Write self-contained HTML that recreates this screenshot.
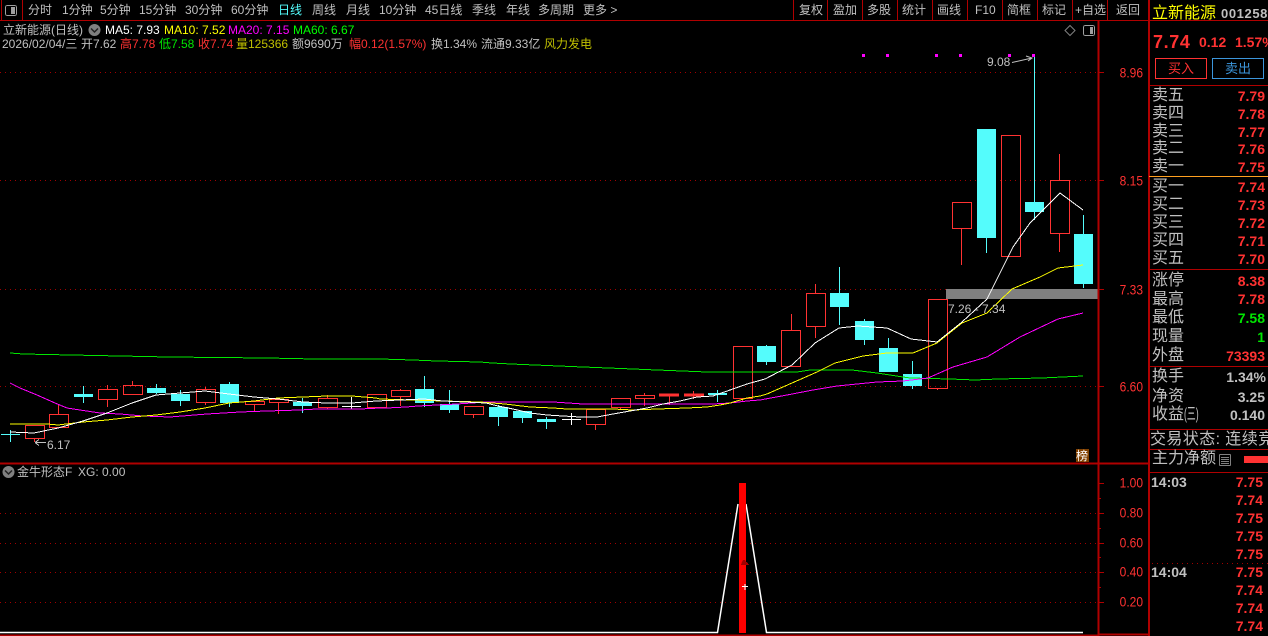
<!DOCTYPE html>
<html><head><meta charset="utf-8">
<style>
html,body{margin:0;padding:0;background:#000;width:1268px;height:636px;overflow:hidden}
body{position:relative;font-family:"Liberation Sans","WenQuanYi Zen Hei","Noto Sans CJK SC",sans-serif;font-size:12px;color:#c0c0c0}
svg{position:absolute;left:0;top:0}
.t{position:absolute;white-space:nowrap;line-height:16px;height:16px}
.r{color:#ff3232}.g{color:#00e600}.y{color:#c0c000}.w{color:#fff}.m{color:#ff00ff}.yy{color:#ffff00}.c{color:#54fcfc}
.l{font-size:16px;line-height:18px;height:18px;left:1152px}
.v{font-size:14px;font-weight:bold;color:#ff3232;right:3px}
.a{font-size:12px;color:#ff3232;right:125px;transform:scaleY(1.18)}
.k{font-size:14px;font-weight:bold;color:#ff3232;right:5px}
.b{position:absolute;box-sizing:border-box;width:52px;height:21px;top:58px;text-align:center;line-height:19px;font-size:13px}
</style></head><body>
<svg width="1268" height="636" viewBox="0 0 1268 636" shape-rendering="crispEdges" fill="none">
<!-- grid -->
<g stroke="#a00000" stroke-dasharray="1 4">
<path d="M0 72.500H1098M0 180.500H1098M0 289.500H1098M0 386.500H1098M0 513.500H1098M0 543.500H1098M0 572.500H1098M0 602.500H1098M1152 563.500H1268"/>
</g>
<rect x="946" y="289" width="152" height="10" fill="#808080"/>
<!-- frame -->
<g stroke="#b00000">
<path d="M0 20.500H1268M1.500 0V20M22.500 0V20M793.500 0V20M827.500 0V20M862.500 0V20M897.500 0V20M932.500 0V20M967.500 0V20M1002.500 0V20M1037.500 0V20M1072.500 0V20M1107.500 0V20"/>
<path d="M1149 85.500H1268M1149 269.500H1268M1149 366.500H1268M1149 429.500H1268M1149 449.500H1268M1149 472.500H1268"/>
<path d="M0 463.500H1149M1098.500 20V636M1149 0V636" stroke-width="2"/>
<path d="M1098 634.500H1149M0 635.500H1098" stroke-width="2"/>
<path d="M1098 72.500h6M1098 180.500h6M1098 289.500h6M1098 386.500h6M1099 483.500h5M1099 513.500h5M1099 543.500h5M1099 572.500h5M1099 602.500h5M1099 498.500h2M1099 528.500h2M1099 557.500h2M1099 587.500h2"/>
</g>
<path d="M1149 176.500H1268" stroke="#ffa020"/>
<!-- red candles -->
<g stroke="#ff3232">
<path d="M34.500 438v4M58.500 404v10M107.500 385v4M107.500 399v8M132.500 381v4M132.500 394v1M205.500 387v2M205.500 402v3M254.500 404v7M278.500 402v12M327.500 395v3M327.500 407v2M376.500 407v1M400.500 389v1M400.500 396v10M473.500 414v4M595.500 424v6M620.500 407v2M644.500 393v2M644.500 398v8M669.500 396v9M693.500 391v3M693.500 396v3M742.500 398v3M791.500 314v16M815.500 284v9M815.500 326v12M937.500 388v2M961.500 228v37M1059.500 154v26M1059.500 233v19"/>
<rect x="25.500" y="425.500" width="19" height="13"/><rect x="49.500" y="414.500" width="19" height="13"/>
<rect x="98.500" y="389.500" width="19" height="10"/><rect x="123.500" y="385.500" width="19" height="9"/>
<rect x="196.500" y="389.500" width="19" height="13"/><rect x="245.500" y="401.500" width="19" height="3"/>
<rect x="269.500" y="399.500" width="19" height="3"/><rect x="318.500" y="398.500" width="19" height="9"/>
<rect x="367.500" y="394.500" width="19" height="13"/><rect x="391.500" y="390.500" width="19" height="6"/>
<rect x="464.500" y="406.500" width="19" height="8"/><rect x="586.500" y="409.500" width="19" height="15"/>
<rect x="611.500" y="398.500" width="19" height="9"/><rect x="635.500" y="395.500" width="19" height="3"/>
<rect x="659.500" y="394" width="19" height="2" fill="#ff3232"/><rect x="684.500" y="394" width="19" height="2" fill="#ff3232"/>
<rect x="733.500" y="346.500" width="19" height="52"/><rect x="781.500" y="330.500" width="19" height="36"/>
<rect x="806.500" y="293.500" width="19" height="33"/><rect x="928.500" y="299.500" width="19" height="89"/>
<rect x="952.500" y="202.500" width="19" height="26"/><rect x="1001.500" y="135.500" width="19" height="121"/>
<rect x="1050.500" y="180.500" width="19" height="53"/>
</g>
<!-- cyan candles -->
<g stroke="#54fcfc">
<path d="M1 434.500H20M10.500 430v12M83.500 386v17M156.500 384v10M180.500 390v16M229.500 382v25M302.500 398v15M424.500 376v31M449.500 390v23M498.500 405v21M522.500 411v12M546.500 417v12M766.500 345v20M839.500 267v58M864.500 319v26M888.500 338v34M912.500 361v28M986.500 129v124M1034.500 55v165M1083.500 215v73M717.500 390v12"/>
</g>
<g fill="#54fcfc">
<rect x="74" y="394" width="19" height="3"/><rect x="147" y="388" width="19" height="5"/><rect x="171" y="394" width="19" height="7"/>
<rect x="220" y="384" width="19" height="19"/><rect x="293" y="402" width="19" height="4"/><rect x="415" y="389" width="19" height="14"/>
<rect x="440" y="404" width="19" height="6"/><rect x="489" y="407" width="19" height="10"/><rect x="513" y="411" width="19" height="7"/>
<rect x="537" y="419" width="19" height="3"/><rect x="708" y="393" width="19" height="2"/><rect x="757" y="346" width="19" height="16"/>
<rect x="830" y="293" width="19" height="14"/><rect x="855" y="321" width="19" height="19"/><rect x="879" y="348" width="19" height="24"/>
<rect x="903" y="374" width="19" height="12"/><rect x="977" y="129" width="19" height="109"/><rect x="1025" y="202" width="19" height="10"/>
<rect x="1074" y="234" width="19" height="50"/>
</g>
<!-- white crosses -->
<path d="M342 406.500H361M351.500 397v12M562 419.500H581M571.500 413v12" stroke="#fff"/>
<!-- MA60 -->
<polyline stroke="#00e600" points="10,353 23,354 71,355 120,356 169,357 267,358 315,359 380,359 413,360 437,361 480,362 492,363 511,364 535,365 559,366 583,367 608,368 633,369 657,370 682,371 707,372 797,372 810,370 852,370 877,373 903,377 910,378 950,379 975,380 998,379 1042,378 1083,376"/>
<!-- MA20 -->
<polyline stroke="#ff00ff" points="10,383 20,388 37,395 55,403 67,408 80,410 100,413 120,414 143,416 170,417 207,414 240,412 267,411 300,410 317,409 360,409 380,408 387,408 406,407 418,406 437,405 457,404 487,402 553,402 583,404 713,404 730,403 747,401 760,400 787,395 813,390 837,386 877,382 903,381 928,378 953,367 987,357 1020,337 1058,319 1083,313"/>
<!-- MA10 -->
<polyline stroke="#ffff00" points="10,424 47,424 58,425 83,422 107,420 132,417 156,415 180,412 205,408 229,403 254,401 278,398 303,397 327,396 352,396 376,398 380,399 443,401 480,402 505,404 530,407 553,408 567,409 613,409 633,410 657,409 687,408 707,407 720,405 730,403 747,398 760,396 767,394 792,383 817,372 835,363 863,356 887,353 913,353 937,343 962,323 987,313 1012,289 1040,277 1058,268 1083,265"/>
<!-- MA5 -->
<polyline stroke="#fff" points="10,432 34,433 58,428 83,421 107,413 132,403 156,395 180,393 205,391 229,394 254,397 278,399 303,402 327,403 352,403 376,401 400,400 424,399 443,401 486,403 498,406 513,409 530,413 547,415 563,416 580,417 597,417 613,414 630,411 647,408 663,404 680,401 697,397 713,396 730,390 747,384 765,379 792,365 815,343 839,328 858,326 887,328 911,339 937,342 962,322 987,299 1013,247 1030,223 1060,193 1083,210" />
<!-- lower -->
<path d="M0 632.500H717.500L738 504M746 504L766.500 632.500H1083" stroke="#fff" stroke-width="1.500" shape-rendering="auto"/>
<rect x="739" y="483" width="7" height="150" fill="#ff0000"/>
<path d="M741 565h8l-2-3h-1l-1-2h-2l-1 2z" fill="#a00000"/>
<path d="M742 586.500h6M745 584v6" stroke="#fff"/>
<!-- magenta dots -->
<g fill="#ff00ff"><rect x="862" y="54" width="3" height="3"/><rect x="886" y="54" width="3" height="3"/><rect x="935" y="54" width="3" height="3"/><rect x="959" y="54" width="3" height="3"/><rect x="1008" y="54" width="3" height="3"/><rect x="1032" y="54" width="3" height="3"/></g>
<!-- annotations -->
<path d="M1012 62.500L1032 58M1026 56l6 2-4 3" stroke="#c0c0c0" shape-rendering="auto"/>
<path d="M35 442.500H46M35 442.500l4-3M35 442.500l4 3" stroke="#c0c0c0"/>
<!-- icons -->
<rect x="5.500" y="5.500" width="11" height="10" rx="2" stroke="#a0a0a0"/><rect x="11" y="7" width="4" height="7" fill="#a0a0a0"/>
<path d="M1070 25.500l5 5-5 5-5-5z" stroke="#808080" shape-rendering="auto"/>
<rect x="1083.500" y="25.500" width="11" height="10" rx="2" stroke="#a0a0a0"/><rect x="1090" y="27" width="3" height="7" fill="#a0a0a0"/>
<circle cx="94.500" cy="30" r="6" fill="#808080" shape-rendering="auto"/><path d="M91 28.500l3.500 3.500 3.500-3.500" stroke="#222" stroke-width="1.500" shape-rendering="auto"/>
<circle cx="8.500" cy="472" r="6" fill="#808080" shape-rendering="auto"/><path d="M5 470.500l3.500 3.500 3.500-3.500" stroke="#222" stroke-width="1.500" shape-rendering="auto"/>
<rect x="1076" y="449" width="13" height="13" fill="#804000"/>
<rect x="1219.500" y="454.500" width="11" height="11" rx="1" stroke="#808080"/><path d="M1221 457.500h8M1221 459.500h8M1221 461.500h8M1221 463.500h8" stroke="#808080"/>
<rect x="1244" y="456" width="24" height="7" fill="#ff3232"/>
</svg>

<!-- toolbar -->
<span class="t" style="left:28px;top:2px">分时</span>
<span class="t" style="left:62px;top:2px">1分钟</span>
<span class="t" style="left:100px;top:2px">5分钟</span>
<span class="t" style="left:139px;top:2px">15分钟</span>
<span class="t" style="left:185px;top:2px">30分钟</span>
<span class="t" style="left:231px;top:2px">60分钟</span>
<span class="t c" style="left:278px;top:2px">日线</span>
<span class="t" style="left:312px;top:2px">周线</span>
<span class="t" style="left:346px;top:2px">月线</span>
<span class="t" style="left:379px;top:2px">10分钟</span>
<span class="t" style="left:425px;top:2px">45日线</span>
<span class="t" style="left:472px;top:2px">季线</span>
<span class="t" style="left:506px;top:2px">年线</span>
<span class="t" style="left:538px;top:2px">多周期</span>
<span class="t" style="left:583px;top:2px">更多 &gt;</span>
<span class="t" style="left:799px;top:2px">复权</span>
<span class="t" style="left:833px;top:2px">盈加</span>
<span class="t" style="left:867px;top:2px">多股</span>
<span class="t" style="left:902px;top:2px">统计</span>
<span class="t" style="left:937px;top:2px">画线</span>
<span class="t" style="left:975px;top:2px">F10</span>
<span class="t" style="left:1007px;top:2px">简框</span>
<span class="t" style="left:1042px;top:2px">标记</span>
<span class="t" style="left:1075px;top:2px">+自选</span>
<span class="t" style="left:1116px;top:2px">返回</span>

<!-- info lines -->
<span class="t" style="left:3px;top:22px">立新能源(日线)</span>
<span class="t w" style="left:105px;top:22px">MA5: 7.93</span>
<span class="t yy" style="left:164px;top:22px">MA10: 7.52</span>
<span class="t m" style="left:228px;top:22px">MA20: 7.15</span>
<span class="t" style="left:293px;top:22px;color:#00ff00">MA60: 6.67</span>
<span class="t" style="left:2px;top:36px">2026/02/04/三</span>
<span class="t" style="left:81px;top:36px">开7.62</span>
<span class="t r" style="left:120px;top:36px">高7.78</span>
<span class="t g" style="left:159px;top:36px">低7.58</span>
<span class="t r" style="left:198px;top:36px">收7.74</span>
<span class="t y" style="left:236px;top:36px">量125366</span>
<span class="t y" style="left:292px;top:36px;color:#c0c0c0">额9690万</span>
<span class="t r" style="left:349px;top:36px">幅0.12(1.57%)</span>
<span class="t" style="left:431px;top:36px">换1.34%</span>
<span class="t" style="left:481px;top:36px">流通9.33亿</span>
<span class="t y" style="left:544px;top:36px">风力发电</span>

<!-- annotations -->
<span class="t" style="left:987px;top:54px">9.08</span>
<span class="t" style="left:47px;top:437px">6.17</span>
<span class="t" style="left:948px;top:301px">7.26 - 7.34</span>
<span class="t" style="left:1076px;top:448px;color:#fff;font-size:12px">榜</span>
<span class="t" style="left:17px;top:464px">金牛形态F</span>
<span class="t" style="left:78px;top:464px">XG: 0.00</span>

<!-- axis -->
<span class="t a" style="top:65px">8.96</span>
<span class="t a" style="top:173px">8.15</span>
<span class="t a" style="top:282px">7.33</span>
<span class="t a" style="top:379px">6.60</span>
<span class="t a" style="top:475px">1.00</span>
<span class="t a" style="top:505px">0.80</span>
<span class="t a" style="top:535px">0.60</span>
<span class="t a" style="top:564px">0.40</span>
<span class="t a" style="top:594px">0.20</span>

<!-- right header -->
<span class="t" style="left:1152px;top:6px;font-size:16px;color:#ffff00">立新能源</span>
<span class="t" style="left:1221px;top:6px;font-size:13px;font-weight:bold;letter-spacing:.6px">001258</span>
<span class="t r" style="left:1153px;top:33px;font-size:18px;line-height:18px;font-weight:bold;letter-spacing:.6px">7.74</span>
<span class="t r" style="left:1199px;top:34px;font-size:14px;font-weight:bold">0.12</span>
<span class="t r" style="left:1235px;top:34px;font-size:14px;font-weight:bold">1.57%</span>
<div class="b r" style="left:1155px;border:1px solid #ff3232">买入</div>
<div class="b" style="left:1212px;border:1px solid #3c96dc;color:#3c96dc">卖出</div>

<!-- order book -->
<span class="t l" style="top:87px">卖五</span><span class="t v" style="top:88px">7.79</span>
<span class="t l" style="top:105px">卖四</span><span class="t v" style="top:106px">7.78</span>
<span class="t l" style="top:123px">卖三</span><span class="t v" style="top:124px">7.77</span>
<span class="t l" style="top:140px">卖二</span><span class="t v" style="top:141px">7.76</span>
<span class="t l" style="top:158px">卖一</span><span class="t v" style="top:159px">7.75</span>
<span class="t l" style="top:178px">买一</span><span class="t v" style="top:179px">7.74</span>
<span class="t l" style="top:196px">买二</span><span class="t v" style="top:197px">7.73</span>
<span class="t l" style="top:214px">买三</span><span class="t v" style="top:215px">7.72</span>
<span class="t l" style="top:232px">买四</span><span class="t v" style="top:233px">7.71</span>
<span class="t l" style="top:250px">买五</span><span class="t v" style="top:251px">7.70</span>
<span class="t l" style="top:272px">涨停</span><span class="t v" style="top:273px">8.38</span>
<span class="t l" style="top:291px">最高</span><span class="t v" style="top:291px">7.78</span>
<span class="t l" style="top:309px">最低</span><span class="t v g" style="top:310px;color:#00e600">7.58</span>
<span class="t l" style="top:328px">现量</span><span class="t v" style="top:329px;color:#00e600">1</span>
<span class="t l" style="top:347px">外盘</span><span class="t v" style="top:348px">73393</span>
<span class="t l" style="top:368px">换手</span><span class="t v" style="top:369px;color:#c0c0c0;right:2px">1.34%</span>
<span class="t l" style="top:388px">净资</span><span class="t v" style="top:389px;color:#c0c0c0">3.25</span>
<span class="t l" style="top:406px">收益<span style="display:inline-block;transform:scaleX(.55);transform-origin:left">(三)</span></span><span class="t v" style="top:407px;color:#c0c0c0">0.140</span>
<span class="t l" style="top:431px;left:1150px;letter-spacing:.4px">交易状态: 连续竞</span>
<span class="t l" style="top:450px">主力净额</span>

<!-- ticks -->
<span class="t" style="left:1151px;top:474px;font-size:14px;font-weight:bold">14:03</span>
<span class="t" style="left:1151px;top:564px;font-size:14px;font-weight:bold">14:04</span>
<span class="t k" style="top:474px">7.75</span>
<span class="t k" style="top:492px">7.74</span>
<span class="t k" style="top:510px">7.75</span>
<span class="t k" style="top:528px">7.75</span>
<span class="t k" style="top:546px">7.75</span>
<span class="t k" style="top:564px">7.75</span>
<span class="t k" style="top:582px">7.74</span>
<span class="t k" style="top:600px">7.74</span>
<span class="t k" style="top:618px">7.74</span>
</body></html>
